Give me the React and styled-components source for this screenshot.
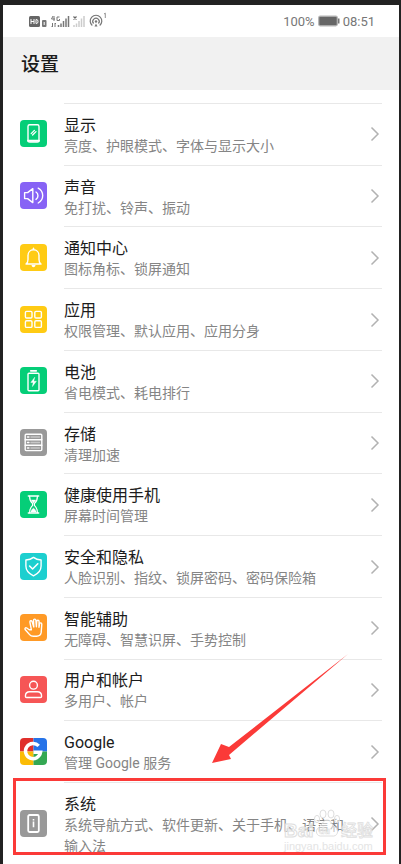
import React from 'react';
import styled, { createGlobalStyle } from 'styled-components';

const GlobalStyle = createGlobalStyle`
  *, *::before, *::after { box-sizing: border-box; }
  body {
    margin: 0;
    background: #222;
    font-family: Roboto, "Noto Sans CJK SC", sans-serif;
    color: #1c1c1c;
  }
  h1, h2, p, ul { margin: 0; padding: 0; font-weight: 400; }
`;

const Frame = styled.div`
  min-height: 100vh;
  padding: 5px 2px 0 3px;
  background: #222;
  display: flex;
`;

const Screen = styled.main`
  position: relative;
  flex: 1;
  min-width: 0;
  display: flex;
  flex-direction: column;
  background: #fff;
`;

const StatusBar = styled.div`
  height: 32px;
  padding: 0 24px 0 25px;
  display: flex;
  align-items: center;
  justify-content: space-between;
  color: #777;
  font-size: 13px;
`;

const StatusGroup = styled.div`
  display: flex;
  align-items: center;
  gap: 3px;
`;

const Header = styled.header`
  height: 53px;
  padding: 0 18px;
  display: flex;
  align-items: center;
  background: #f1f1f1;
`;

const PageTitle = styled.h1`
  font-size: 19px;
  line-height: 28px;
  padding-top: 2px;
  && { font-weight: 500; }
`;

const Settings = styled.ul`
  flex: 1;
  display: flex;
  flex-direction: column;
  list-style: none;
`;

const ClippedRow = styled.li`
  height: 13px;
  padding: 0 17px 0 61px;
  display: flex;
  align-items: flex-end;
  overflow: hidden;
`;

const ClippedText = styled.p`
  padding-bottom: 10px;
  font-size: 14px;
  line-height: 20px;
  color: #b0b0b0;
`;

const Item = styled.li`
  flex: ${({ $tall }) => ($tall ? '0 0 82px' : '1 0 60px')};
  display: flex;
`;

const RowLink = styled.a`
  flex: 1;
  min-width: 0;
  padding: 0 17px;
  display: flex;
  align-items: stretch;
  gap: 17px;
  color: inherit;
  text-decoration: none;
`;

const Tile = styled.span`
  flex: none;
  align-self: center;
  width: 27px;
  height: 27px;
  border-radius: 4px;
  overflow: hidden;
  display: flex;
  background: ${({ $color }) => $color};
`;

const RowBody = styled.div`
  flex: 1;
  min-width: 0;
  display: flex;
  align-items: center;
  justify-content: space-between;
  gap: 20px;
  border-top: 1px solid #e8e8e8;
`;

const Labels = styled.div`
  min-width: 0;
  padding-top: 4px;
`;

const ItemTitle = styled.h2`
  font-size: 16px;
  line-height: 20px;
`;

const ItemNote = styled.p`
  font-size: 14px;
  line-height: 21px;
  color: #858585;
`;

const Chevron = styled.svg`
  flex: none;
  width: 10px;
  height: 16px;
  margin-right: 2px;
`;

const Highlight = styled.div`
  position: absolute;
  left: 10px;
  right: 13px;
  bottom: 9px;
  height: 77px;
  border: 3px solid #fb3a38;
  pointer-events: none;
`;

const Arrow = styled.svg`
  position: absolute;
  right: 50px;
  bottom: 100px;
  width: 138px;
  height: 110px;
  pointer-events: none;
`;

const Watermark = styled.svg`
  position: absolute;
  right: 22px;
  bottom: 8px;
  width: 94px;
  height: 48px;
  pointer-events: none;
`;

const line = { fill: 'none', stroke: '#fff', strokeWidth: 1.4, strokeLinecap: 'round', strokeLinejoin: 'round' };

const Glyph = ({ children }) => (
  <svg width="27" height="27" viewBox="0 0 27 27" aria-hidden="true" {...line}>{children}</svg>
);

const glyphs = {
  display: (
    <Glyph>
      <rect x="8" y="4.8" width="11" height="17.2" rx="1.6" />
      <path d="M8 20.8h11" strokeWidth="2" />
      <path d="M11.2 13.6l3.2-3.2M12.6 15l3.4-3.4" strokeWidth="1.3" />
    </Glyph>
  ),
  sound: (
    <Glyph>
      <path d="M4.6 10.6v6h3l5.2 4V6.6l-5.2 4z" />
      <path d="M16 10c2.600 1.600 2.600 5.600 0 7.400M18.200 6.200c6 3.400 6 11.400 0 14.800" />
    </Glyph>
  ),
  bell: (
    <Glyph>
      <path d="M6 20c1.600-1.200 2-2.600 2-4.600v-3.800c0-3.400 2.400-5.800 5.500-5.800s5.500 2.400 5.500 5.800v3.800c0 2 .4 3.400 2 4.600z" />
      <path d="M13.500 4.300v1" /><path d="M12.200 21.600a1.400 1.400 0 0 0 2.600 0z" fill="#fff" />
    </Glyph>
  ),
  apps: (
    <Glyph>
      <rect x="5.400" y="5.400" width="6.600" height="6.600" rx="1.200" /><rect x="14.800" y="5.400" width="6.600" height="6.600" rx="1.200" />
      <rect x="5.400" y="14.800" width="6.600" height="6.600" rx="1.200" /><rect x="14.800" y="14.800" width="6.600" height="6.600" rx="1.200" />
    </Glyph>
  ),
  battery: (
    <Glyph>
      <path d="M10.800 3.800h5.400" strokeWidth="1.800" />
      <rect x="8" y="6.200" width="11" height="17.600" rx="1" />
      <path d="M14.600 10.400l-3.800 5h2.400l-.8 4.200 4-5.400h-2.500z" fill="#fff" strokeWidth=".4" />
    </Glyph>
  ),
  storage: (
    <Glyph>
      <rect x="5.200" y="5.200" width="16.600" height="16.400" rx="1" /><path d="M5.200 10.700h16.600M5.200 16.200h16.600" />
      <path d="M7.600 8h1.200M7.600 13.500h1.200M7.600 19h1.200" strokeWidth="1.600" />
      <path d="M11 8h8.400M11 13.500h8.400M11 19h8.400" strokeWidth="1.400" opacity=".45" />
    </Glyph>
  ),
  hourglass: (
    <Glyph>
      <path d="M8.400 5h10.200M8.400 22h10.200" strokeWidth="1.600" />
      <path d="M9.600 5.400c0 4 1 5.400 3 7.200v1.800c-2 1.800-3 3.200-3 7.200M17.400 5.400c0 4-1 5.400-3 7.200v1.800c2 1.800 3 3.200 3 7.200" strokeWidth="1.200" />
      <path d="M11.200 9h4.600l-2.300 3.200zM10.800 21c.4-2 1.400-3 2.700-3.800 1.300.8 2.300 1.800 2.700 3.800z" fill="#fff" strokeWidth=".4" />
    </Glyph>
  ),
  shield: (
    <Glyph>
      <path d="M13.500 4.400c2.400 1.800 4.800 2.400 7.600 2.600v6c0 4.800-2.800 7.600-7.600 9.800-4.800-2.200-7.600-5-7.600-9.800V7c2.800-.2 5.200-.8 7.600-2.600z" />
      <path d="M9.600 13l3 3 5.200-5.200" strokeWidth="1.600" />
    </Glyph>
  ),
  hand: (
    <Glyph>
      <path d="M9.200 15.800L6.800 14c-1.400-.8-2.400.6-1.500 1.800l4.300 4.800c1 1.200 2.200 1.600 3.800 1.600h3.200c2.600 0 4.200-1.400 4.600-3.800l.6-8.200c0-1.700-2.100-1.800-2.300-.2l-.5 3.200.1-5.600c0-1.700-2.300-1.800-2.400-.1l-.3 5.300-.5-6.500c-.2-1.700-2.400-1.500-2.400.1l.3 6.600-1.700-5.400c-.5-1.500-2.500-1-2.200.6l1.500 7.600z" strokeWidth="1.400" />
    </Glyph>
  ),
  user: (
    <Glyph>
      <circle cx="13.500" cy="9.200" r="3.900" />
      <path d="M5.400 20.200c0-2.800 1.800-4.400 4.400-4.400h7.400c2.600 0 4.400 1.600 4.400 4.400 0 .9-.4 1.300-1.200 1.300H6.600c-.8 0-1.200-.4-1.200-1.300z" />
    </Glyph>
  ),
  google: (
    <svg width="27" height="27" viewBox="0 0 27 27" aria-hidden="true">
      <path d="M0 0h13.500v13.500H0z" fill="#e02f2c" /><path d="M13.500 0H27v13.500H13.500z" fill="#2673e8" />
      <path d="M0 13.500h13.500V27H0z" fill="#fbbc05" /><path d="M13.500 13.500H27V27H13.500z" fill="#34a853" />
      <path d="M18.700 7.900a7.600 7.600 0 1 0 1.900 6.400h-7.100" fill="none" stroke="#fff" strokeWidth="3.400" />
    </svg>
  ),
  system: (
    <Glyph>
      <rect x="8.200" y="5" width="10.600" height="17" rx="1.400" strokeWidth="1.800" />
      <path d="M13.500 9v1.400M13.500 11.600v5.600" strokeWidth="1.600" strokeLinecap="butt" />
    </Glyph>
  ),
};

const items = [
  { icon: 'display', color: '#05ce78', title: '显示', note: '亮度、护眼模式、字体与显示大小' },
  { icon: 'sound', color: '#8763f5', title: '声音', note: '免打扰、铃声、振动' },
  { icon: 'bell', color: '#ffcb14', title: '通知中心', note: '图标角标、锁屏通知' },
  { icon: 'apps', color: '#ffcb14', title: '应用', note: '权限管理、默认应用、应用分身' },
  { icon: 'battery', color: '#05ce78', title: '电池', note: '省电模式、耗电排行' },
  { icon: 'storage', color: '#999', title: '存储', note: '清理加速' },
  { icon: 'hourglass', color: '#05ce78', title: '健康使用手机', note: '屏幕时间管理' },
  { icon: 'shield', color: '#1dcfcf', title: '安全和隐私', note: '人脸识别、指纹、锁屏密码、密码保险箱' },
  { icon: 'hand', color: '#ff9a26', title: '智能辅助', note: '无障碍、智慧识屏、手势控制' },
  { icon: 'user', color: '#f65656', title: '用户和帐户', note: '多用户、帐户' },
  { icon: 'google', color: '#fff', title: 'Google', note: '管理 Google 服务' },
  { icon: 'system', color: '#999', title: '系统', note: '系统导航方式、软件更新、关于手机、语言和输入法', tall: true },
];

const SignalIcons = () => (
  <svg width="80" height="20" viewBox="0 0 80 20" role="img" aria-label="HD 4G">
    <rect x="1" y="5" width="11" height="11" rx="1.500" fill="#666" />
    <path d="M3 8v5M6 8v5M3 10.500h3M8 8.500v4h.8c1.600 0 1.600-4 0-4z" fill="none" stroke="#fff" strokeWidth="1" />
    <rect x="14" y="9" width="4.500" height="7" rx="1" fill="#777" />
    <path d="M16.200 11v3" stroke="#fff" strokeWidth="1" />
    <path d="M25 5l-1.500 3H27M26 5v5M31.500 6h-2.500v3.500h2.500V8M24.500 12v4l-1-1M27 16v-4l1 1" fill="none" stroke="#777" strokeWidth="1" />
    <path d="M30.500 14v2M33 12.500V16M35.500 10v6M38 7.500V16M40.500 5v11" stroke="#777" strokeWidth="1.500" />
    <path d="M45.500 5.500l3 3M48.500 5.500l-3 3" stroke="#666" strokeWidth="1.200" />
    <path d="M46 14v2M48.500 12.500V16M51 10v6M53.500 7.500V16M56 5v11" stroke="#ccc" strokeWidth="1.500" />
    <path d="M64.300 14.500a5.800 5.800 0 1 1 7.400 0M65.600 12.500a3.200 3.200 0 1 1 4.800 0" fill="none" stroke="#777" strokeWidth="1.200" />
    <circle cx="68" cy="10.500" r="1.200" fill="#777" /><path d="M66.500 15.500l1.500-3 1.500 3z" fill="#777" />
    <path d="M76 3l1.300-.8V7" fill="none" stroke="#777" strokeWidth=".8" />
  </svg>
);

const BatteryIcon = () => (
  <svg width="22" height="12" viewBox="0 0 22 12" role="img" aria-label="电量">
    <rect x=".7" y="1.200" width="18.600" height="9.600" rx="1.500" fill="#666" stroke="#b5b5b5" strokeWidth="1.200" />
    <path d="M20.700 3.500v5" stroke="#777" strokeWidth="1.600" />
  </svg>
);

const SettingRow = ({ item }) => (
  <Item $tall={item.tall}>
    <RowLink href="#">
      <Tile $color={item.color}>{glyphs[item.icon]}</Tile>
      <RowBody>
        <Labels>
          <ItemTitle>{item.title}</ItemTitle>
          <ItemNote>{item.note}</ItemNote>
        </Labels>
        <Chevron viewBox="0 0 10 16" aria-hidden="true">
          <path d="M1.500 1.500L8 8l-6.500 6.500" fill="none" stroke="#b2b2b2" strokeWidth="1.500" />
        </Chevron>
      </RowBody>
    </RowLink>
  </Item>
);

export default function App() {
  return (
    <>
      <GlobalStyle />
      <Frame>
        <Screen>
          <StatusBar>
            <SignalIcons />
            <StatusGroup>
              <span>100%</span>
              <BatteryIcon />
              <span>08:51</span>
            </StatusGroup>
          </StatusBar>
          <Header>
            <PageTitle>设置</PageTitle>
          </Header>
          <Settings>
            <ClippedRow>
              <ClippedText>主题、桌面壁纸</ClippedText>
            </ClippedRow>
            {items.map((item) => <SettingRow key={item.title} item={item} />)}
          </Settings>
          <Arrow viewBox="0 0 138 110" aria-hidden="true">
            <path d="M137 0L18 93l-8-3L1 109l19-4-2-4z" fill="#fb3a38" />
          </Arrow>
          <Highlight />
          <Watermark viewBox="0 0 94 48" role="img" aria-label="Baidu 经验">
            <g fill="#fff" fillOpacity=".5" stroke="#dedede" strokeWidth="1">
              <ellipse cx="34" cy="11" rx="2.600" ry="3.600" /><ellipse cx="40" cy="6" rx="3" ry="4" />
              <ellipse cx="48" cy="6" rx="3" ry="4" /><ellipse cx="54" cy="11" rx="2.600" ry="3.600" />
              <path d="M44 12c-4 0-5 5-8 7-5 4-2 10 3 9h10c5 1 8-5 3-9-3-2-4-7-8-7z" />
              <text x="1" y="29" fontSize="19" fontWeight="700" fontFamily="Liberation Sans">Bai</text>
              <text x="36" y="26" fontSize="9" fontWeight="700" strokeWidth=".6" fontFamily="Liberation Sans">du</text>
              <text x="58" y="28" fontSize="16" fontWeight="500" strokeWidth=".8" fontFamily="Noto Sans CJK SC">经验</text>
              <text x="1" y="42" fontSize="11" fill="#e4e4e4" fillOpacity="1" stroke="none" fontFamily="Liberation Sans">jingyan.baidu.com</text>
            </g>
          </Watermark>
        </Screen>
      </Frame>
    </>
  );
}
